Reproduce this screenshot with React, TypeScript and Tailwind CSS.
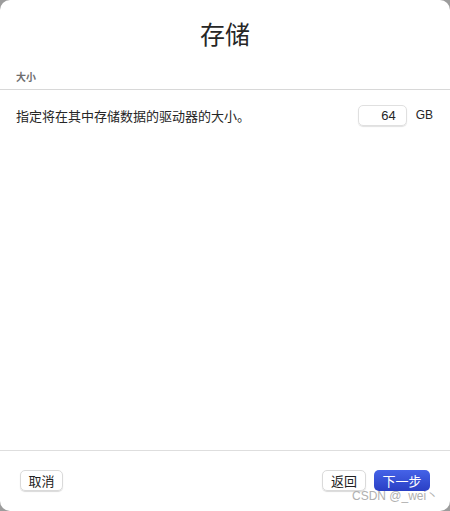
import React from "react";

export default function App() {
  const font = { fontFamily: '"PingFang SC", "Noto Sans CJK SC", "Liberation Sans", sans-serif' };
  return (
    <div className="w-[450px] h-[511px] bg-[#9c9c9c]" style={font}>
      <div className="w-full h-full bg-white rounded-[10px] flex flex-col relative overflow-hidden">
        <div className="h-[64px] flex items-center justify-center pt-[2px]">
          <span className="text-[25px] text-[#262626] leading-none">存储</span>
        </div>
        <div className="h-[26px] flex items-center px-[16px] border-b border-[#d8d8d8]">
          <span className="text-[10px] font-semibold text-[#6e6e6e] leading-none">大小</span>
        </div>
        <div className="flex items-center h-[50px] pl-[16px] pr-[17px]">
          <span className="text-[13px] text-[#262626] flex-1 leading-none">指定将在其中存储数据的驱动器的大小。</span>
          <div className="w-[49px] h-[21px] rounded-[5px] border border-[#e0e0e0] shadow-[0_1px_1px_rgba(0,0,0,0.12)] flex items-center justify-end pr-[10px]">
            <span className="text-[13px] text-[#262626] leading-none" style={{ fontFamily: '"Liberation Sans", sans-serif' }}>64</span>
          </div>
          <span className="ml-[9px] text-[12px] text-[#262626] leading-none" style={{ fontFamily: '"Liberation Sans", sans-serif' }}>GB</span>
        </div>
        <div className="flex-1 border-b border-[#dedede]" />
        <div className="h-[60px] flex items-start pt-[19px] px-[20px]">
          <div className="w-[43px] h-[21px] rounded-[5px] border border-[#dadada] shadow-[0_1px_1px_rgba(0,0,0,0.15)] flex items-center justify-center">
            <span className="text-[13px] text-[#222] leading-none">取消</span>
          </div>
          <div className="flex-1" />
          <div className="w-[44px] h-[21px] rounded-[5px] border border-[#dadada] shadow-[0_1px_1px_rgba(0,0,0,0.15)] flex items-center justify-center">
            <span className="text-[13px] text-[#222] leading-none">返回</span>
          </div>
          <div className="ml-[8px] w-[56px] h-[21px] rounded-[5px] bg-gradient-to-b from-[#4563e8] to-[#2a3fc4] flex items-center justify-center">
            <span className="text-[13px] text-white leading-none">下一步</span>
          </div>
        </div>
        <span
          className="absolute left-[352px] top-[490px] text-[12px] text-[#b0b0b0] leading-none"
          style={{ fontFamily: '"Liberation Sans", "Noto Sans CJK SC", sans-serif' }}
        >
          CSDN @_wei丶
        </span>
      </div>
    </div>
  );
}
